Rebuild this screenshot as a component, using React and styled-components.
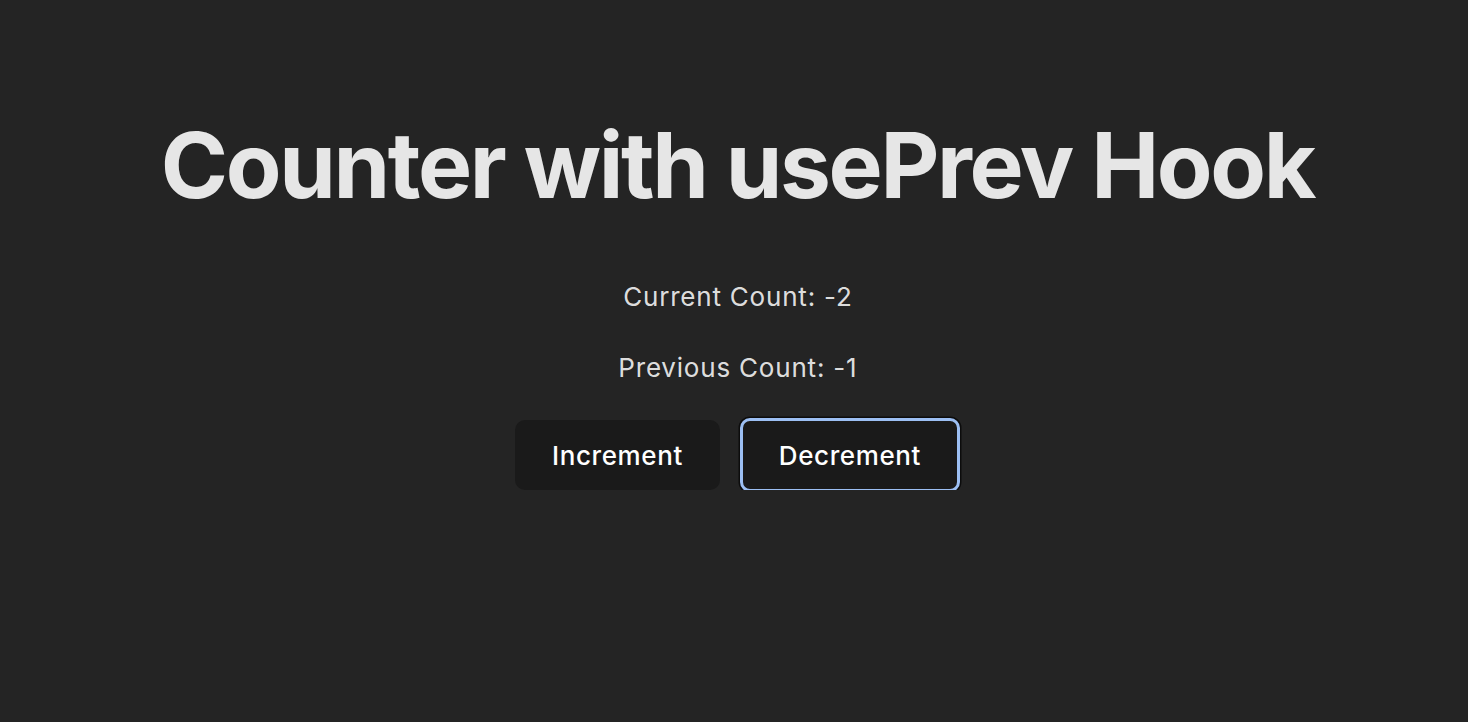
import React, { useState, useRef, useEffect } from "react";
import styled, { createGlobalStyle } from "styled-components";

const Global = createGlobalStyle`
	body {
		margin: 0;
		background: #242424;
		color: rgba(255, 255, 255, 0.87);
		font-family: Inter, "Noto Sans", sans-serif;
		font-size: 26px;
		line-height: 1.5;
	}
`;

function usePrev(value) {
	const ref = useRef();
	useEffect(() => {
		ref.current = value;
	}, [value]);
	return ref.current;
}

function App() {
	const [count] = useState(-2);
	const prev = -1;

	return (
		<>
			<Global />
			<Page>
				<Title>Counter with usePrev Hook</Title>
				<Line>Current Count: {count}</Line>
				<Line>Previous Count: {prev}</Line>
				<Buttons>
					<Button>Increment</Button>
					<Button $focused>Decrement</Button>
				</Buttons>
			</Page>
		</>
	);
}

export default App;

const Page = styled.div`
	display: flex;
	flex-direction: column;
	align-items: center;
	padding: 115px 0 0 7px;
	text-align: center;
`;

const Title = styled.h1`
	margin: 0 0 62px;
	font-size: 91px;
	font-weight: 700;
	line-height: 1.1;
	color: #e6e6e6;
	letter-spacing: -2.35px;
`;

const Line = styled.p`
	margin: 0 0 32px;
	letter-spacing: 0.8px;
	font-size: 26px;
	line-height: 39px;
	padding-left: 0.8px;
`;

const Buttons = styled.div`
	display: flex;
	gap: 20px;
	margin-top: 1px;
`;

const Button = styled.button`
	font-family: inherit;
	font-size: 26px;
	font-weight: 500;
	letter-spacing: 0.6px;
	line-height: 39px;
	color: #fff;
	background: #1a1a1a;
	border-radius: 10px;
	padding: 14.5px 36px;
	border: ${(p) => (p.$focused ? "3px solid #9cbff3" : "1px solid transparent")};
	box-shadow: ${(p) => (p.$focused ? "0 0 0 1.5px #0c0c0c" : "none")};
	margin: ${(p) => (p.$focused ? "-2px 0" : "0")};
	cursor: pointer;
	outline: none;
`;
